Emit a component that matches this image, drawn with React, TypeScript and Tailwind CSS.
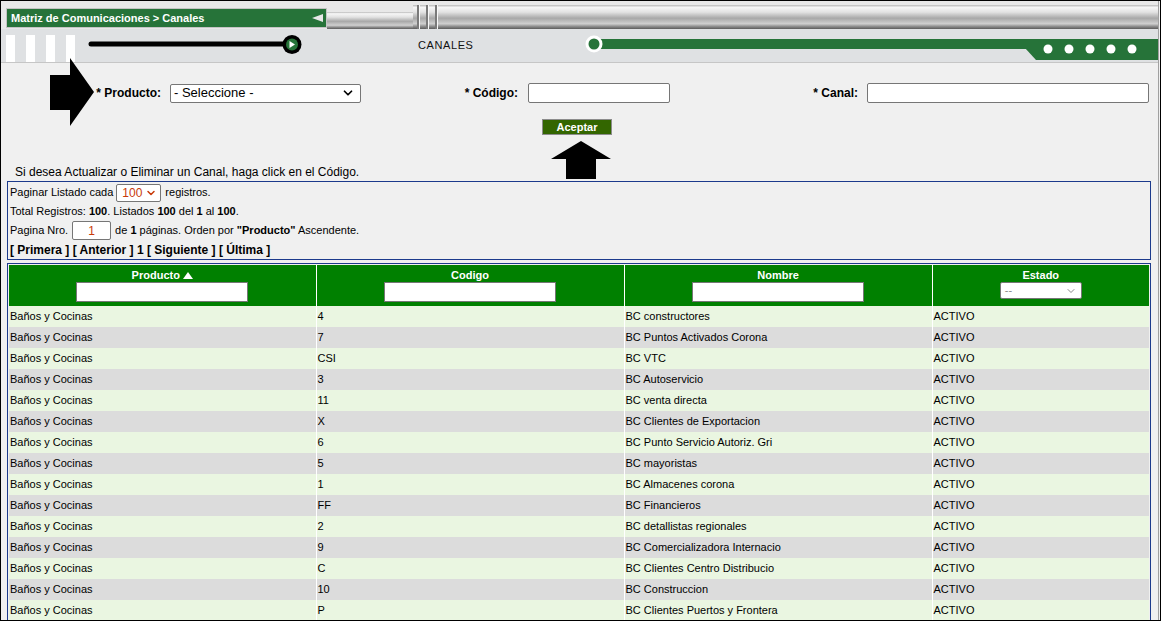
import React from "react";
import { ChevronDown } from "lucide-react";

const rows: [string, string][] = [
  ["4", "BC constructores"],
  ["7", "BC Puntos Activados Corona"],
  ["CSI", "BC VTC"],
  ["3", "BC Autoservicio"],
  ["11", "BC venta directa"],
  ["X", "BC Clientes de Exportacion"],
  ["6", "BC Punto Servicio Autoriz. Gri"],
  ["5", "BC mayoristas"],
  ["1", "BC Almacenes corona"],
  ["FF", "BC Financieros"],
  ["2", "BC detallistas regionales"],
  ["9", "BC Comercializadora Internacio"],
  ["C", "BC Clientes Centro Distribucio"],
  ["10", "BC Construccion"],
  ["P", "BC Clientes Puertos y Frontera"],
];

const metal =
  "bg-[linear-gradient(to_bottom,#b8b8b8_0%,#f6f6f6_10%,#e2e2e2_30%,#a8a8a8_55%,#cfcfcf_78%,#8a8a8a_90%,#5c5c5c_100%)]";

export default function App() {
  return (
    <div className="relative w-[1161px] h-[621px] overflow-hidden border border-black bg-[#f0f0f0] font-['Liberation_Sans',Arial,sans-serif] text-black">
      <div className="w-[1158px] h-full border-r border-[#a0a0a0]">
        {/* Band 1 */}
        <div className="flex items-start h-[28px] bg-[#e8e8e8]">
          <div className="w-[5px]" />
          <div className="mt-[7px] w-[321px] h-[20px] border border-[#c4c4c4] bg-[#267339] flex items-center justify-between pl-[4px] pr-[2px]">
            <span className="text-[11px] font-bold text-white leading-none">
              Matriz de Comunicaciones &gt; Canales
            </span>
            <svg width="12" height="8" viewBox="0 0 12 8">
              <polygon points="0,4 11,0 11,8" fill="#e8e8e8" />
            </svg>
          </div>
          <div className={`mt-[11px] w-[86px] h-[17px] ${metal}`} />
          <div className={`mt-[4px] w-[34px] h-[24px] flex ${metal}`}>
            <div className="w-[4px]" />
            <div className="w-[2px] h-full bg-[#7a7a7a]" />
            <div className="w-[1px] h-full bg-[#f8f8f8]" />
            <div className="w-[6px]" />
            <div className="w-[2px] h-full bg-[#7a7a7a]" />
            <div className="w-[1px] h-full bg-[#f8f8f8]" />
            <div className="w-[6px]" />
            <div className="w-[2px] h-full bg-[#7a7a7a]" />
            <div className="w-[1px] h-full bg-[#f8f8f8]" />
          </div>
          <div className={`mt-[4px] flex-1 h-[24px] ${metal}`} />
        </div>

        {/* Band 2 */}
        <div className="flex items-start h-[34px] bg-[#dfe1e3] border-b border-[#c6c6c6]">
          <div className="ml-[5px] mt-[6px] flex gap-[11px]">
            <div className="w-[9px] h-[27px] bg-white" />
            <div className="w-[9px] h-[27px] bg-white" />
            <div className="w-[9px] h-[27px] bg-white" />
            <div className="w-[9px] h-[27px] bg-white" />
          </div>
          <svg className="ml-[10px]" width="220" height="33" viewBox="0 0 220 33">
            <line x1="6" y1="15" x2="200" y2="15" stroke="#000" strokeWidth="5" strokeLinecap="round" />
            <circle cx="207" cy="15.5" r="9.5" fill="#000" />
            <circle cx="207" cy="15.5" r="6" fill="#267339" />
            <polygon points="204.5,12 204.5,19 210,15.5" fill="#fff" />
          </svg>
          <div className="ml-[113px] w-[166px] h-[33px] flex items-center text-[11px] tracking-[0.6px] text-[#111]">
            CANALES
          </div>
          <svg width="574" height="33" viewBox="0 0 574 33">
            <rect x="10" y="10" width="564" height="10" fill="#267339" />
            <polygon points="441,19 574,19 574,31 452,31" fill="#267339" />
            <circle cx="10" cy="15" r="8.5" fill="#fff" />
            <circle cx="10" cy="15" r="5.5" fill="#267339" />
            {[464, 485, 506, 527, 548].map((x) => (
              <circle key={x} cx={x} cy="20" r="4.5" fill="#fff" />
            ))}
          </svg>
        </div>

        {/* Form row */}
        <div className="mt-[20px] flex items-center h-[20px] text-[12px] font-bold">
          <div className="w-[160px] text-right">* Producto:</div>
          <div className="ml-[9px] w-[191px] h-[19px] border border-[#767676] rounded-[2px] bg-white flex items-center justify-between pl-[3px] pr-[5px] font-normal text-[13px]">
            <span>- Seleccione -</span>
            <ChevronDown size={14} strokeWidth={3} />
          </div>
          <div className="w-[157px] text-right">* Código:</div>
          <div className="ml-[10px] w-[142px] h-[20px] border border-[#767676] rounded-[2px] bg-white" />
          <div className="w-[188px] text-right">* Canal:</div>
          <div className="ml-[9px] w-[282px] h-[20px] border border-[#767676] rounded-[2px] bg-white" />
        </div>

        {/* Button */}
        <div className="mt-[16px] flex">
          <div className="ml-[541px] w-[70px] h-[16px] bg-[#336600] border border-[#8c8c8c] flex items-center justify-center text-white text-[11px] font-bold">
            Aceptar
          </div>
        </div>

        {/* Info text */}
        <div className="mt-[30px] pl-[14px] text-[12px] leading-[14px]">
          Si desea Actualizar o Eliminar un Canal, haga click en el Código.
        </div>

        {/* Pagination panel */}
        <div className="mt-[2px] ml-[6px] w-[1144px] border border-[#1c3a8c] pt-[1px] pl-[2px] text-[11px]">
          <div className="h-[19px] flex items-center">
            <span>Paginar Listado cada</span>
            <div className="ml-[3px] w-[45px] h-[18px] border border-[#767676] rounded-[2px] bg-white flex items-center justify-between pl-[5px] pr-[3px] text-[12px] text-[#c83a0a]">
              <span>100</span>
              <ChevronDown size={12} strokeWidth={3} />
            </div>
            <span className="ml-[4px]">registros.</span>
          </div>
          <div className="h-[19px] flex items-center">
            <span>
              Total Registros: <b>100</b>. Listados <b>100</b> del <b>1</b> al <b>100</b>.
            </span>
          </div>
          <div className="h-[19px] flex items-center">
            <span>Pagina Nro.</span>
            <div className="ml-[4px] w-[39px] h-[19px] border border-[#767676] rounded-[2px] bg-white flex items-center justify-center text-[12px] text-[#c83a0a]">
              1
            </div>
            <span className="ml-[4px]">
              de <b>1</b> páginas. Orden por <b>"Producto"</b> Ascendente.
            </span>
          </div>
          <div className="h-[19px] flex items-center text-[12px] font-bold">
            [ Primera ] [ Anterior ] 1 [ Siguiente ] [ Última ]
          </div>
        </div>

        {/* Table */}
        <div className="mt-[3px] ml-[6px] w-[1144px] border border-[#1c3a8c] p-px">
          <table className="w-[1140px] table-fixed border-collapse text-[11px]">
            <colgroup>
              <col className="w-[307px]" />
              <col className="w-[308px]" />
              <col className="w-[308px]" />
              <col className="w-[217px]" />
            </colgroup>
            <thead>
              <tr>
                <th className="bg-[#008000] p-0 pt-[3px] pb-[4px] text-white font-bold">
                  <div className="leading-[14px] flex items-center justify-center gap-[3px]">
                    Producto
                    <svg width="10" height="7" viewBox="0 0 10 7">
                      <polygon points="0,7 5,0 10,7" fill="#fff" />
                    </svg>
                  </div>
                  <div className="mx-auto w-[172px] h-[20px] bg-white border border-[#767676]" />
                </th>
                <th className="bg-[#008000] p-0 pt-[3px] pb-[4px] text-white font-bold border-l border-white">
                  <div className="leading-[14px]">Codigo</div>
                  <div className="mx-auto w-[172px] h-[20px] bg-white border border-[#767676]" />
                </th>
                <th className="bg-[#008000] p-0 pt-[3px] pb-[4px] text-white font-bold border-l border-white">
                  <div className="leading-[14px]">Nombre</div>
                  <div className="mx-auto w-[172px] h-[20px] bg-white border border-[#767676]" />
                </th>
                <th className="bg-[#008000] p-0 pt-[3px] pb-[4px] text-white font-bold border-l border-white">
                  <div className="leading-[14px]">Estado</div>
                  <div className="mx-auto mb-[3px] w-[82px] h-[17px] bg-white border border-[#767676] rounded-[2px] flex items-center justify-between pl-[4px] pr-[4px] text-[#8a8a8a] font-normal">
                    <span>--</span>
                    <ChevronDown size={12} strokeWidth={2} />
                  </div>
                </th>
              </tr>
            </thead>
            <tbody>
              {rows.map(([code, name], i) => (
                <tr key={i} className={i % 2 === 0 ? "bg-[#eaf6e1]" : "bg-[#dcdcdc]"}>
                  <td className="h-[21px] p-0 pl-px">Baños y Cocinas</td>
                  <td className="h-[21px] p-0 pl-px border-l border-white">{code}</td>
                  <td className="h-[21px] p-0 pl-px border-l border-white">{name}</td>
                  <td className="h-[21px] p-0 pl-px border-l border-white">ACTIVO</td>
                </tr>
              ))}
            </tbody>
          </table>
        </div>
      </div>

      {/* Annotation arrows */}
      <svg className="absolute left-[49px] top-[57px]" width="45" height="70" viewBox="0 0 45 70">
        <polygon points="0,17 20,17 20,0 44,34 20,68 20,52 0,52" fill="#000" />
      </svg>
      <svg className="absolute left-[550px] top-[140px]" width="61" height="38" viewBox="0 0 61 38">
        <polygon points="30,0 60,18 45,18 45,38 15,38 15,18 0,18" fill="#000" />
      </svg>
    </div>
  );
}
